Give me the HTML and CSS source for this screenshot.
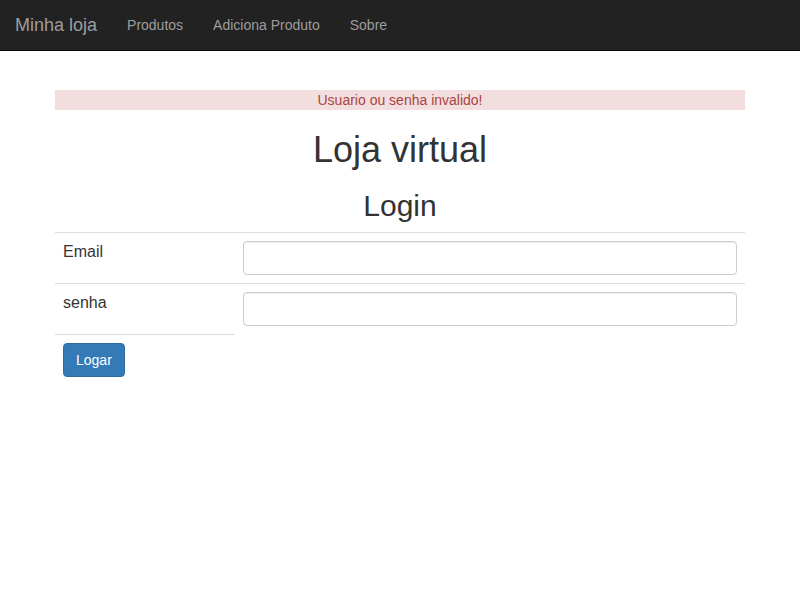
FILE: index.html
```html
<!DOCTYPE html>
<html lang="pt">
<head>
<meta charset="utf-8">
<title>Loja virtual</title>
<link rel="stylesheet" href="styles.css">
</head>
<body>
<nav class="navbar">
  <a class="brand" href="#">Minha loja</a>
  <ul class="nav">
    <li><a href="#">Produtos</a></li>
    <li><a href="#">Adiciona Produto</a></li>
    <li><a href="#">Sobre</a></li>
  </ul>
</nav>
<main class="container">
  <div class="alert">Usuario ou senha invalido!</div>
  <h1 class="title">Loja virtual</h1>
  <h2 class="subtitle">Login</h2>
  <form>
    <table class="table">
      <tbody>
        <tr>
          <td class="label-cell">Email</td>
          <td><input class="form-control" type="text"></td>
        </tr>
        <tr>
          <td class="label-cell">senha</td>
          <td><input class="form-control" type="password"></td>
        </tr>
        <tr>
          <td class="label-cell"><button class="btn" type="button">Logar</button></td>
        </tr>
      </tbody>
    </table>
  </form>
</main>
</body>
</html>
```
FILE: styles.css
```css
* { box-sizing: border-box; }
html, body { margin: 0; padding: 0; background: #fff; }
body {
  font-family: "Liberation Sans", Arial, sans-serif;
  font-size: 14px;
  line-height: 1.42857;
  color: #333;
}
.navbar {
  display: flex;
  align-items: flex-start;
  height: 51px;
  background: #222;
  border-bottom: 1px solid #080808;
}
.brand {
  display: block;
  padding: 15px;
  height: 50px;
  font-size: 18px;
  line-height: 20px;
  color: #9d9d9d;
  text-decoration: none;
}
.nav {
  display: flex;
  list-style: none;
  margin: 0;
  padding: 0;
}
.nav a {
  display: block;
  padding: 15px;
  line-height: 20px;
  color: #9d9d9d;
  text-decoration: none;
}
.container {
  width: 690px;
  margin: 0 auto;
  padding-top: 39px;
}
.alert {
  background: #f2dede;
  color: #a94442;
  text-align: center;
  line-height: 20px;
  height: 20px;
}
.title {
  font-size: 36px;
  font-weight: 500;
  line-height: 39px;
  text-align: center;
  margin: 20px 0 10px;
}
.subtitle {
  font-size: 30px;
  font-weight: 500;
  line-height: 33px;
  text-align: center;
  margin: 20px 0 10px;
}
form { margin: 0; }
.table {
  width: 100%;
  border-collapse: collapse;
  border-spacing: 0;
}
.table td {
  padding: 8px;
  border-top: 1px solid #ddd;
  vertical-align: top;
  font-size: 16px;
  line-height: 1.42857;
}
.label-cell { width: 180px; }
.form-control {
  display: block;
  width: 100%;
  height: 34px;
  padding: 6px 12px;
  font-family: inherit;
  font-size: 14px;
  color: #555;
  background: #fff;
  border: 1px solid #ccc;
  border-radius: 4px;
  box-shadow: inset 0 1px 1px rgba(0,0,0,.075);
}
.btn {
  display: inline-block;
  height: 34px;
  padding: 6px 12px;
  font-family: inherit;
  font-size: 14px;
  line-height: 20px;
  color: #fff;
  background: #337ab7;
  border: 1px solid #2e6da4;
  border-radius: 4px;
  cursor: pointer;
}
```
